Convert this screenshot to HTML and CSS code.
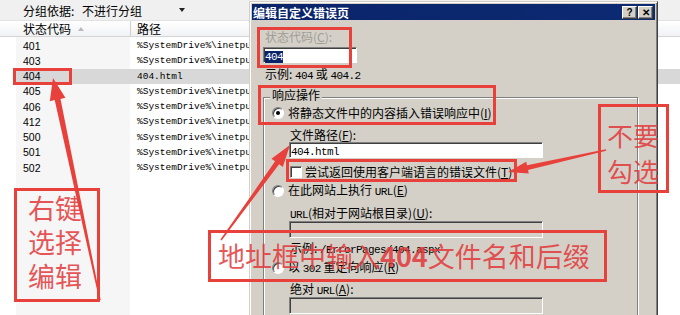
FILE: index.html
```html
<!DOCTYPE html>
<html lang="zh-CN">

<head>
    <meta charset="UTF-8">
    <title>编辑自定义错误页</title>
    <link rel="stylesheet" href="styles.css">
</head>

<body>
    <div class="screen">

        <!-- error pages list behind the dialog -->
        <div class="list-pane">
            <div class="group-bar">
                <span class="group-label">分组依据:</span>
                <span class="group-select">不进行分组<span class="select-arrow"></span></span>
            </div>
            <div class="list-header">
                <div class="head-col head-code">状态代码<span class="sort-arrow"></span></div>
                <div class="head-col head-path">路径</div>
            </div>
            <div class="list-body">
                <div class="row"><div class="cell-code">401</div><div class="cell-path">%SystemDrive%\inetpub\custerr\&lt;LANGUAGE-TAG&gt;\401.htm</div></div>
                <div class="row"><div class="cell-code">403</div><div class="cell-path">%SystemDrive%\inetpub\custerr\&lt;LANGUAGE-TAG&gt;\403.htm</div></div>
                <div class="row selected"><div class="cell-code">404</div><div class="cell-path">404.html</div></div>
                <div class="row"><div class="cell-code">405</div><div class="cell-path">%SystemDrive%\inetpub\custerr\&lt;LANGUAGE-TAG&gt;\405.htm</div></div>
                <div class="row"><div class="cell-code">406</div><div class="cell-path">%SystemDrive%\inetpub\custerr\&lt;LANGUAGE-TAG&gt;\406.htm</div></div>
                <div class="row"><div class="cell-code">412</div><div class="cell-path">%SystemDrive%\inetpub\custerr\&lt;LANGUAGE-TAG&gt;\412.htm</div></div>
                <div class="row"><div class="cell-code">500</div><div class="cell-path">%SystemDrive%\inetpub\custerr\&lt;LANGUAGE-TAG&gt;\500.htm</div></div>
                <div class="row"><div class="cell-code">501</div><div class="cell-path">%SystemDrive%\inetpub\custerr\&lt;LANGUAGE-TAG&gt;\501.htm</div></div>
                <div class="row"><div class="cell-code">502</div><div class="cell-path">%SystemDrive%\inetpub\custerr\&lt;LANGUAGE-TAG&gt;\502.htm</div></div>
            </div>
        </div>

        <!-- edit dialog -->
        <div class="dialog">
            <div class="titlebar">
                <span class="title">编辑自定义错误页</span>
                <span class="title-buttons">
                    <span class="tbtn">?</span>
                    <span class="tbtn">&#x2715;</span>
                </span>
            </div>
            <div class="dialog-body">
                <div class="line disabled">状态代码(<u>C</u>):</div>
                <div class="textbox code-box"><span class="latin selected-text">404</span></div>
                <div class="line hint">示例: <span class="latin">404</span> 或 <span class="latin">404.2</span></div>

                <div class="groupbox">
                    <div class="group-title">响应操作</div>
                    <div class="option opt-first">
                        <span class="radio checked"></span>
                        <span class="option-text">将静态文件中的内容插入错误响应中(<u>I</u>)</span>
                    </div>
                    <div class="line indent lbl-file">文件路径(<u>F</u>):</div>
                    <div class="textbox field"><span class="latin">404.html</span></div>
                    <div class="option check-row">
                        <span class="checkbox"></span>
                        <span class="option-text">尝试返回使用客户端语言的错误文件(<u>T</u>)</span>
                    </div>
                    <div class="option opt-second">
                        <span class="radio"></span>
                        <span class="option-text">在此网站上执行 <span class="latin">URL</span>(<u>E</u>)</span>
                    </div>
                    <div class="line indent lbl-url"><span class="latin">URL</span>(相对于网站根目录)(<u>U</u>):</div>
                    <div class="textbox field off field-url"></div>
                    <div class="line indent lbl-example">示例: <span class="latin">/ErrorPages/404.aspx</span></div>
                    <div class="option opt-third">
                        <span class="radio"></span>
                        <span class="option-text">以 <span class="latin">302</span> 重定向响应(<u>R</u>)</span>
                    </div>
                    <div class="line indent lbl-abs">绝对 <span class="latin">URL</span>(<u>A</u>):</div>
                    <div class="textbox field off field-abs"></div>
                </div>
            </div>
        </div>

        <!-- red annotations on top -->
        <div class="mark mark-row"></div>
        <div class="mark mark-code"></div>
        <div class="mark mark-action"></div>
        <div class="mark mark-check"></div>
        <div class="mark note note-nocheck">不要<br>勾选</div>
        <div class="mark note note-rightclick">右键<br>选择<br>编辑</div>
        <div class="mark note note-input">地址框中输入<b>404</b>文件名和后缀</div>

        <svg class="arrows" width="680" height="315" viewBox="0 0 680 315">
            <polygon points="53,78 65.4,97.8 60.5,98.9 100.7,299.9 99.3,300.1 54.7,100.1 49.8,101.2" />
            <polygon points="508,172 528.8,173.5 528,170 606.2,150.8 605.8,149.2 527,165.2 526.2,161.7" />
            <polygon points="290,145 282.8,166.9 279.1,164.3 221.6,240.4 220.4,239.6 275.1,161.3 271.4,158.7" />
        </svg>
    </div>
</body>

</html>
```

FILE: styles.css
```css
* {
    box-sizing: border-box;
}

body {
    margin: 0;
    background-color: #fff;
    font-family: "Noto Sans CJK SC", sans-serif;
    font-size: 12px;
    color: #000;
}

.screen {
    position: relative;
    width: 680px;
    height: 315px;
    overflow: hidden;
}

/* list pane */

.group-bar {
    display: flex;
    align-items: center;
    height: 21px;
    padding-left: 23px;
    background-color: #f0f0f0;
    border-bottom: 1px solid #e2e2e2;
}

.group-label {
    width: 59px;
}

.group-select {
    display: flex;
    align-items: center;
    width: 106px;
}

.select-arrow {
    margin-left: auto;
    margin-right: 3px;
    border-left: 3.5px solid transparent;
    border-right: 3.5px solid transparent;
    border-top: 4px solid #222;
}

.list-header {
    display: flex;
    height: 16px;
    background: linear-gradient(#ffffff, #f1f2f4);
    border-bottom: 1px solid #d5d5d5;
}

.head-col {
    display: flex;
    align-items: center;
    height: 15px;
}

.head-code {
    width: 131px;
    padding-left: 23px;
    border-right: 1px solid #cfcfcf;
}

.head-path {
    padding-left: 6px;
}

.sort-arrow {
    margin-left: 7px;
    border-left: 3.5px solid transparent;
    border-right: 3.5px solid transparent;
    border-bottom: 4px solid #b9b9b9;
}

.list-body {
    height: 278px;
    margin-left: 16px;
    padding-top: 1px;
    background: linear-gradient(to right, #f6f6f6 114px, #fff 114px);
}

.row {
    display: flex;
    align-items: center;
    height: 15.25px;
}

.row.selected {
    background-color: #d8d8d8;
}

.cell-code {
    width: 114px;
    padding-left: 7px;
    font-family: "Liberation Sans", sans-serif;
    font-size: 10.5px;
}

.cell-path {
    padding-left: 7px;
    white-space: nowrap;
    font-family: "Liberation Mono", monospace;
    font-size: 9.5px;
}

/* dialog */

.dialog {
    position: absolute;
    left: 249px;
    top: 1px;
    width: 409px;
    height: 340px;
    padding: 2px;
    background-color: #d4d0c8;
    border: 1px solid;
    border-color: #d4d0c8 #404040 #404040 #d4d0c8;
    box-shadow: inset 1px 1px #fff, inset -1px -1px #808080;
}

.titlebar {
    display: flex;
    align-items: center;
    height: 16px;
    padding: 0 2px 0 1px;
    background: linear-gradient(to right, #0a246a, #0c2a72);
    color: #fff;
    font-weight: bold;
}

.title-buttons {
    display: flex;
    gap: 1px;
    margin-left: auto;
}

.tbtn {
    display: flex;
    align-items: center;
    justify-content: center;
    width: 15px;
    height: 13px;
    background-color: #d4d0c8;
    border: 1px solid;
    border-color: #fff #404040 #404040 #fff;
    box-shadow: inset -1px -1px #808080;
    color: #000;
    font-family: "Liberation Sans", sans-serif;
    font-size: 10px;
    font-weight: bold;
}

.dialog-body {
    padding: 10px 0 0 13px;
}

.line {
    height: 14px;
    line-height: 14px;
    white-space: nowrap;
}

.latin {
    font-family: "Liberation Mono", monospace;
    font-size: 11px;
    letter-spacing: -0.6px;
}

.disabled {
    color: #a09d96;
}

.textbox {
    height: 16px;
    padding: 1px 0 0 1px;
    line-height: 12px;
    background-color: #fff;
    border: 1px solid;
    border-color: #808080 #fff #fff #808080;
    box-shadow: inset 1px 1px #404040;
}

.code-box {
    width: 94px;
    margin: 3px 0 0 -2px;
}

.selected-text {
    display: inline-block;
    height: 12px;
    line-height: 12px;
    background-color: #0a246a;
    color: #fff;
}

.hint {
    margin-top: 4px;
}

.groupbox {
    width: 375px;
    height: 240px;
    margin: 16px 0 0 -2px;
    border: 1px solid #808080;
    box-shadow: inset 1px 1px #fff, 1px 1px #fff;
}

.group-title {
    width: fit-content;
    height: 14px;
    margin: -10px 0 0 6px;
    padding: 0 2px;
    line-height: 14px;
    background-color: #d4d0c8;
}

.option {
    display: flex;
    align-items: center;
    height: 14px;
    margin-left: 8px;
    white-space: nowrap;
}

.option-text {
    line-height: 14px;
}

.radio {
    position: relative;
    flex: none;
    width: 12px;
    height: 12px;
    margin-right: 4px;
    border-radius: 50%;
    background-color: #fff;
    border: 1px solid;
    border-color: #808080 #fff #fff #808080;
    box-shadow: inset 1px 1px #404040;
}

.radio.checked::after {
    content: "";
    position: absolute;
    left: 3px;
    top: 3px;
    width: 4px;
    height: 4px;
    border-radius: 50%;
    background-color: #000;
}

.checkbox {
    flex: none;
    width: 12px;
    height: 12px;
    margin-right: 3px;
    background-color: #fff;
    border: 1px solid;
    border-color: #808080 #fff #fff #808080;
    box-shadow: inset 1px 1px #404040;
}

.indent {
    margin-left: 26px;
}

.field {
    width: 254px;
    margin-left: 25px;
}

.field.off {
    height: 17px;
    background-color: #d4d0c8;
}

.opt-first { margin-top: 4px; }
.lbl-file { margin-top: 8px; }
.check-row { margin: 7px 0 0 26px; }
.opt-second { margin-top: 5px; }
.lbl-url { margin-top: 8px; }
.field-url { margin-top: 1px; }
.lbl-example { margin-top: 3px; }
.opt-third { margin-top: 6px; }
.lbl-abs { margin-top: 7px; }
.field-abs { margin-top: 1px; }

/* annotations */

.mark {
    position: absolute;
    border: 3px solid #e8413b;
}

.mark-row {
    left: 13px;
    top: 68px;
    width: 59px;
    height: 17px;
}

.mark-code {
    left: 257px;
    top: 27px;
    width: 95px;
    height: 41px;
}

.mark-action {
    left: 258px;
    top: 85px;
    width: 238px;
    height: 40px;
}

.mark-check {
    left: 286px;
    top: 159px;
    width: 231px;
    height: 23px;
}

.note {
    color: rgba(226, 56, 58, 0.85);
    white-space: nowrap;
}

.note-nocheck {
    left: 598px;
    top: 104px;
    width: 71px;
    height: 89px;
    padding: 10px 0 0 6px;
    font-size: 26px;
    line-height: 36px;
}

.note-rightclick {
    left: 14px;
    top: 188px;
    width: 86px;
    height: 114px;
    padding-left: 11px;
    font-size: 27px;
    line-height: 34px;
}

.note-input {
    left: 208px;
    top: 230px;
    width: 399px;
    height: 52px;
    padding-left: 7px;
    font-size: 27px;
    line-height: 46px;
}

.note-input b {
    font-weight: bold;
}

.arrows {
    position: absolute;
    left: 0;
    top: 0;
    fill: #e8413b;
    pointer-events: none;
}
```
